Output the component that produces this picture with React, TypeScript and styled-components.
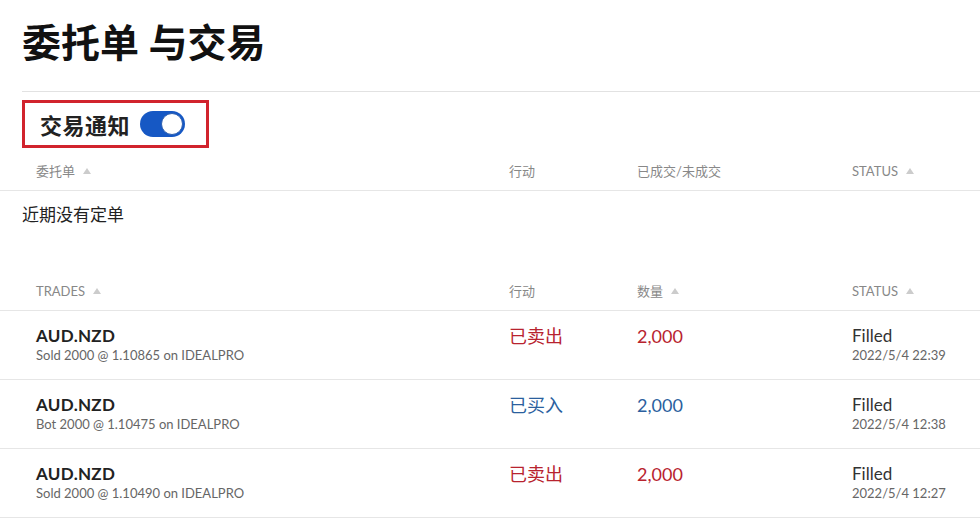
import { createGlobalStyle } from 'styled-components'
import styled from 'styled-components'

const GlobalStyle = createGlobalStyle`
  body {
    margin: 0;
    background: #fff;
    font-family: Lato, "Noto Sans CJK SC", sans-serif;
    color: #222;
  }
`

const Page = styled.div`
  width: 980px;
  overflow: hidden;
`

const Title = styled.h1`
  margin: 17px 0 0 22px;
  font-size: 39px;
  line-height: 50px;
  font-weight: 700;
  color: #111;
`

const Divider = styled.div`
  margin: 24px 0 0 22px;
  border-top: 1px solid #e2e2e2;
`

const NotifyBox = styled.div`
  margin: 8px 0 0 22px;
  width: 187px;
  height: 48px;
  box-sizing: border-box;
  border: 3px solid #d1232d;
  display: flex;
  align-items: center;
  padding-left: 15px;
  gap: 10px;
`

const NotifyLabel = styled.span`
  font-size: 22px;
  letter-spacing: 0.5px;
  font-weight: 700;
  color: #222;
`

const Toggle = styled.div<{ $on: boolean }>`
  position: relative;
  width: 45px;
  height: 26px;
  border-radius: 13px;
  background: ${(p) => (p.$on ? '#1658c4' : '#bbb')};
  &::after {
    content: '';
    position: absolute;
    top: 2px;
    left: ${(p) => (p.$on ? '21px' : '2px')};
    width: 20px;
    height: 20px;
    border-radius: 50%;
    background: #fff;
    border: 1px solid #2d5fb0;
  }
`

const HeaderRow = styled.div`
  display: grid;
  grid-template-columns: 473px 128px 215px 1fr;
  padding: 3px 0 0 36px;
  height: 39px;
  align-items: center;
  border-bottom: 1px solid #e6e6e6;
  font-size: 13px;
  color: #888;
`

const HeadCell = styled.div`
  display: flex;
  align-items: center;
`

const SortArrow = styled.span`
  margin-left: 8px;
  width: 0;
  height: 0;
  border-left: 4px solid transparent;
  border-right: 4px solid transparent;
  border-bottom: 6px solid #ccc;
`

const Empty = styled.div`
  padding: 12px 0 0 22px;
  height: 65px;
  font-size: 17px;
  line-height: 24px;
  color: #222;
`

const Row = styled.div`
  display: grid;
  grid-template-columns: 473px 128px 215px 1fr;
  padding: 15px 0 15px 36px;
  border-bottom: 1px solid #e6e6e6;
`

const Symbol = styled.div`
  font-size: 17px;
  line-height: 20px;
  font-weight: 700;
  letter-spacing: 0.3px;
  color: #222;
`

const Sub = styled.div`
  font-size: 13px;
  line-height: 18px;
  color: #666;
`

const Side = styled.div<{ $sell: boolean }>`
  font-size: 18px;
  line-height: 20px;
  color: ${(p) => (p.$sell ? '#b8232f' : '#2b5f9e')};
`

const Status = styled.div`
  font-size: 17px;
  line-height: 20px;
  color: #333;
`

type Trade = {
  sell: boolean
  desc: string
  time: string
}

const trades: Trade[] = [
  { sell: true, desc: 'Sold 2000 @ 1.10865 on IDEALPRO', time: '2022/5/4 22:39' },
  { sell: false, desc: 'Bot 2000 @ 1.10475 on IDEALPRO', time: '2022/5/4 12:38' },
  { sell: true, desc: 'Sold 2000 @ 1.10490 on IDEALPRO', time: '2022/5/4 12:27' },
]

export default function App() {
  return (
    <Page>
      <GlobalStyle />
      <Title>委托单 与交易</Title>
      <Divider />
      <NotifyBox>
        <NotifyLabel>交易通知</NotifyLabel>
        <Toggle $on />
      </NotifyBox>

      <HeaderRow>
        <HeadCell>
          委托单
          <SortArrow />
        </HeadCell>
        <HeadCell>行动</HeadCell>
        <HeadCell>已成交/未成交</HeadCell>
        <HeadCell>
          STATUS
          <SortArrow />
        </HeadCell>
      </HeaderRow>
      <Empty>近期没有定单</Empty>

      <HeaderRow>
        <HeadCell>
          TRADES
          <SortArrow />
        </HeadCell>
        <HeadCell>行动</HeadCell>
        <HeadCell>
          数量
          <SortArrow />
        </HeadCell>
        <HeadCell>
          STATUS
          <SortArrow />
        </HeadCell>
      </HeaderRow>
      {trades.map((t) => (
        <Row key={t.time}>
          <div>
            <Symbol>AUD.NZD</Symbol>
            <Sub>{t.desc}</Sub>
          </div>
          <Side $sell={t.sell}>{t.sell ? '已卖出' : '已买入'}</Side>
          <Side $sell={t.sell}>2,000</Side>
          <div>
            <Status>Filled</Status>
            <Sub>{t.time}</Sub>
          </div>
        </Row>
      ))}
    </Page>
  )
}
